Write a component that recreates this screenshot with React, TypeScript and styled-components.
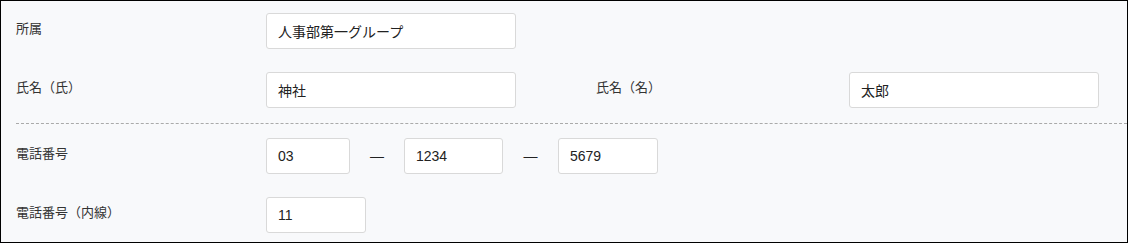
import React from "react";
import styled, {createGlobalStyle} from "styled-components";

const GlobalStyle = createGlobalStyle`
    * {
        box-sizing: border-box;
    }
    body {
        margin: 0;
        font-family: "Liberation Sans", "Noto Sans CJK JP", sans-serif;
        color: #333;
    }
`;

const FormPanel = styled.div`
    width: 1128px;
    height: 243px;
    border: 1px solid #000;
    background: #f8f9fb;
    padding: 12px 0 0 15px;
    overflow: hidden;
`;

const Row = styled.div<{ $gap?: number }>`
    display: flex;
    align-items: flex-start;
    margin-top: ${p => p.$gap ?? 0}px;
`;

const Label = styled.div<{ $width?: number }>`
    width: ${p => p.$width ?? 250}px;
    flex-shrink: 0;
    font-size: 13px;
    line-height: 20px;
    padding-top: 6px;
    color: #333;
`;

const Field = styled.div<{ $width?: number }>`
    width: ${p => p.$width ?? 250}px;
    height: 36px;
    flex-shrink: 0;
    background: #fff;
    border: 1px solid #d9d9d9;
    border-radius: 3px;
    padding: 0 11px;
    display: flex;
    align-items: center;
    font-size: 14px;
    color: #222;
`;

const Spacer = styled.div`
    width: 80px;
    flex-shrink: 0;
`;

const Separator = styled.div`
    border-top: 1px dashed #aaa;
    margin: 15px 0 14px 0;
`;

const PhoneGroup = styled.div`
    display: flex;
    align-items: center;
`;

const Dash = styled.span<{ $width?: number }>`
    width: ${p => p.$width ?? 54}px;
    text-align: center;
    font-size: 14px;
    color: #222;
`;

const App = () => {
    return (
        <>
            <GlobalStyle />
            <FormPanel>
                <Row>
                    <Label>所属</Label>
                    <Field>人事部第一グループ</Field>
                </Row>
                <Row $gap={23}>
                    <Label>氏名（氏）</Label>
                    <Field>神社</Field>
                    <Spacer />
                    <Label $width={253}>氏名（名）</Label>
                    <Field>太郎</Field>
                </Row>
                <Separator />
                <Row>
                    <Label>電話番号</Label>
                    <PhoneGroup>
                        <Field $width={84}>03</Field>
                        <Dash>—</Dash>
                        <Field $width={99}>1234</Field>
                        <Dash $width={55}>—</Dash>
                        <Field $width={100}>5679</Field>
                    </PhoneGroup>
                </Row>
                <Row $gap={23}>
                    <Label>電話番号（内線）</Label>
                    <Field $width={100}>11</Field>
                </Row>
            </FormPanel>
        </>
    );
};

export default App;
